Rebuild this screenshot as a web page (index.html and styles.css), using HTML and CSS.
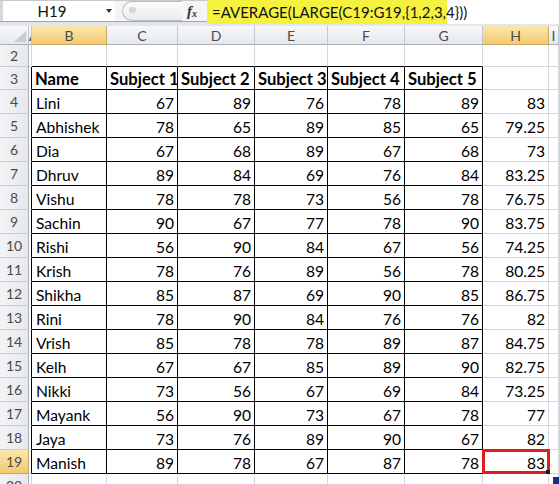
FILE: index.html
```html
<!DOCTYPE html>
<html>
<head>
<meta charset="utf-8">
<link rel="stylesheet" href="styles.css">
</head>
<body>
<div class="fbar">
  <div class="namebox"><span class="nbtext">H19</span><span class="nbarrow"></span></div>
  <div class="fgap">
    <div class="pill"><span class="dot"></span></div>
    <span class="fx">f<sub>x</sub></span>
  </div>
  <div class="finput"><span class="hl">=AVERAGE(LARGE(C19:G19,{1,2,3,4}))</span></div>
</div>
<div class="band"></div>
<div class="sheet">
  <div class="row hrow">
    <div class="c h corner"><svg width="12" height="11" viewBox="0 0 12 11"><path d="M12 0 L12 11 L0 11 Z" fill="#c9ccd1"/></svg></div>
    <div class="c h acol"><span>A</span></div>
    <div class="c h sel">B</div>
    <div class="c h">C</div>
    <div class="c h">D</div>
    <div class="c h">E</div>
    <div class="c h">F</div>
    <div class="c h">G</div>
    <div class="c h sel">H</div>
    <div class="c h">I</div>
  </div>
  <div class="row r2">
    <div class="c rh">2</div><div class="c a"></div>
    <div class="c tt"></div><div class="c tt"></div><div class="c tt"></div><div class="c tt"></div><div class="c tt"></div><div class="c tt"></div>
    <div class="c"></div><div class="c"></div>
  </div>
  <div class="row r3">
    <div class="c rh">3</div><div class="c a tl"></div>
    <div class="c t b">Name</div><div class="c t b">Subject 1</div><div class="c t b">Subject 2</div><div class="c t b">Subject 3</div><div class="c t b">Subject 4</div><div class="c t b">Subject 5</div>
    <div class="c"></div><div class="c"></div>
  </div>
  <div class="row"><div class="c rh">4</div><div class="c a tl"></div><div class="c t s">Lini</div><div class="c t n">67</div><div class="c t n">89</div><div class="c t n">76</div><div class="c t n">78</div><div class="c t n">89</div><div class="c n">83</div><div class="c"></div></div>
  <div class="row"><div class="c rh">5</div><div class="c a tl"></div><div class="c t s">Abhishek</div><div class="c t n">78</div><div class="c t n">65</div><div class="c t n">89</div><div class="c t n">85</div><div class="c t n">65</div><div class="c n">79.25</div><div class="c"></div></div>
  <div class="row"><div class="c rh">6</div><div class="c a tl"></div><div class="c t s">Dia</div><div class="c t n">67</div><div class="c t n">68</div><div class="c t n">89</div><div class="c t n">67</div><div class="c t n">68</div><div class="c n">73</div><div class="c"></div></div>
  <div class="row"><div class="c rh">7</div><div class="c a tl"></div><div class="c t s">Dhruv</div><div class="c t n">89</div><div class="c t n">84</div><div class="c t n">69</div><div class="c t n">76</div><div class="c t n">84</div><div class="c n">83.25</div><div class="c"></div></div>
  <div class="row"><div class="c rh">8</div><div class="c a tl"></div><div class="c t s">Vishu</div><div class="c t n">78</div><div class="c t n">78</div><div class="c t n">73</div><div class="c t n">56</div><div class="c t n">78</div><div class="c n">76.75</div><div class="c"></div></div>
  <div class="row"><div class="c rh">9</div><div class="c a tl"></div><div class="c t s">Sachin</div><div class="c t n">90</div><div class="c t n">67</div><div class="c t n">77</div><div class="c t n">78</div><div class="c t n">90</div><div class="c n">83.75</div><div class="c"></div></div>
  <div class="row"><div class="c rh">10</div><div class="c a tl"></div><div class="c t s">Rishi</div><div class="c t n">56</div><div class="c t n">90</div><div class="c t n">84</div><div class="c t n">67</div><div class="c t n">56</div><div class="c n">74.25</div><div class="c"></div></div>
  <div class="row"><div class="c rh">11</div><div class="c a tl"></div><div class="c t s">Krish</div><div class="c t n">78</div><div class="c t n">76</div><div class="c t n">89</div><div class="c t n">56</div><div class="c t n">78</div><div class="c n">80.25</div><div class="c"></div></div>
  <div class="row"><div class="c rh">12</div><div class="c a tl"></div><div class="c t s">Shikha</div><div class="c t n">85</div><div class="c t n">87</div><div class="c t n">69</div><div class="c t n">90</div><div class="c t n">85</div><div class="c n">86.75</div><div class="c"></div></div>
  <div class="row"><div class="c rh">13</div><div class="c a tl"></div><div class="c t s">Rini</div><div class="c t n">78</div><div class="c t n">90</div><div class="c t n">84</div><div class="c t n">76</div><div class="c t n">76</div><div class="c n">82</div><div class="c"></div></div>
  <div class="row"><div class="c rh">14</div><div class="c a tl"></div><div class="c t s">Vrish</div><div class="c t n">85</div><div class="c t n">78</div><div class="c t n">78</div><div class="c t n">89</div><div class="c t n">87</div><div class="c n">84.75</div><div class="c"></div></div>
  <div class="row"><div class="c rh">15</div><div class="c a tl"></div><div class="c t s">Kelh</div><div class="c t n">67</div><div class="c t n">67</div><div class="c t n">85</div><div class="c t n">89</div><div class="c t n">90</div><div class="c n">82.75</div><div class="c"></div></div>
  <div class="row"><div class="c rh">16</div><div class="c a tl"></div><div class="c t s">Nikki</div><div class="c t n">73</div><div class="c t n">56</div><div class="c t n">67</div><div class="c t n">69</div><div class="c t n">84</div><div class="c n">73.25</div><div class="c"></div></div>
  <div class="row"><div class="c rh">17</div><div class="c a tl"></div><div class="c t s">Mayank</div><div class="c t n">56</div><div class="c t n">90</div><div class="c t n">73</div><div class="c t n">67</div><div class="c t n">78</div><div class="c n">77</div><div class="c"></div></div>
  <div class="row"><div class="c rh">18</div><div class="c a tl"></div><div class="c t s">Jaya</div><div class="c t n">73</div><div class="c t n">76</div><div class="c t n">89</div><div class="c t n">90</div><div class="c t n">67</div><div class="c n">82</div><div class="c"></div></div>
  <div class="row"><div class="c rh sel">19</div><div class="c a tl"></div><div class="c t s">Manish</div><div class="c t n">89</div><div class="c t n">78</div><div class="c t n">67</div><div class="c t n">87</div><div class="c t n">78</div><div class="c n active">83<span class="handle"></span><span class="navy"></span></div><div class="c"></div></div>
  <div class="row"><div class="c rh">20</div><div class="c a"></div><div class="c"></div><div class="c"></div><div class="c"></div><div class="c"></div><div class="c"></div><div class="c"></div><div class="c"></div><div class="c"></div></div>
</div>
</body>
</html>
```
FILE: styles.css
```css
* { box-sizing: border-box; }
body {
  margin: 0;
  width: 559px;
  height: 484px;
  overflow: hidden;
  background: #fff;
  font-family: Lato, "Liberation Sans", sans-serif;
  color: #000;
}
.fbar {
  display: flex;
  height: 22px;
  border-top: 1px solid #c9c9c9;
  border-bottom: 1px solid #a6a6a6;
  background: #fff;
}
.namebox {
  width: 115px;
  border-left: 3px solid #d6d9de;
  display: flex;
  align-items: center;
  background: #fff;
}
.nbtext {
  width: 98px;
  text-align: center;
  font-size: 15px;
  color: #111;
}
.nbarrow {
  margin-left: 5px;
  width: 0;
  height: 0;
  border-left: 3px solid transparent;
  border-right: 3px solid transparent;
  border-top: 4px solid #333;
}
.fgap {
  width: 92px;
  display: flex;
  align-items: center;
  background: #f5f5f5;
}
.pill {
  margin-left: 7px;
  width: 60px;
  height: 20px;
  border: 1px solid #b9bcc0;
  border-right: none;
  border-radius: 10px 0 0 10px;
  background: linear-gradient(#fdfdfd, #e9eaec);
  position: relative;
}
.dot {
  position: absolute;
  left: 6px;
  top: 5px;
  width: 7px;
  height: 6px;
  border-radius: 50%;
  background: #d2d4d8;
}
.fx {
  margin-left: 5px;
  font-family: "Liberation Serif", serif;
  font-style: italic;
  font-weight: bold;
  font-size: 15px;
  color: #333;
  line-height: 1;
}
.fx sub { font-size: 10px; vertical-align: -1px; }
.finput {
  flex: 1;
  align-self: flex-start;
  margin-top: -1px;
  background: #fff;
  white-space: nowrap;
}
.hl {
  position: relative;
  z-index: 2;
  display: inline-block;
  height: 24px;
  width: 240px;
  padding: 0 0 0 5px;
  line-height: 24px;
  font-size: 15px;
  white-space: nowrap;
  background: #f4f23e;
  color: #111;
}
.band {
  height: 4px;
  background: #e2e5e9;
}
.row {
  display: grid;
  grid-template-columns: 29px 3px 75px 71px 77px 73px 77px 78px 66px 10px;
  height: 24px;
}
.hrow { height: 19px; }
.r2 { height: 22px; }
.r3 { height: 23px; }
.c {
  border-right: 1px solid #d4d6d9;
  border-bottom: 1px solid #d4d6d9;
  display: flex;
  align-items: flex-end;
  font-size: 15.6px;
  line-height: 19px;
  white-space: nowrap;
  overflow: hidden;
}
.h {
  background: linear-gradient(#f7f8fa, #e5e8ec);
  border-right-color: #c3c7cd;
  border-bottom-color: #a9b0b9;
  justify-content: center;
  align-items: center;
  font-size: 14px;
  color: #4b4b4b;
}
.h.sel, .rh.sel {
  background: linear-gradient(#fbe7ad, #f4c970);
  border-right-color: #c9a760;
  border-bottom-color: #c9a760;
}
.corner {
  justify-content: flex-end;
  align-items: flex-end;
  padding: 0 2px 2px 0;
}
.acol {
  justify-content: flex-start;
  color: #333;
}
.rh {
  background: linear-gradient(90deg, #f2f3f5, #e6e8ec);
  border-right-color: #a9b0b9;
  border-bottom-color: #c9ccd1;
  justify-content: center;
  align-items: center;
  font-size: 14px;
  color: #4b4b4b;
}
.tl { border-right-color: #000; }
.tt { border-bottom-color: #000; }
.t {
  border-right-color: #000;
  border-bottom-color: #000;
}
.s { padding-left: 4px; }
.b { padding-left: 3px; font-weight: bold; font-size: 16.6px; }
.n { justify-content: flex-end; padding-right: 3px; }
.active {
  position: relative;
  overflow: visible;
}
.active::after {
  content: "";
  position: absolute;
  left: -1px;
  top: -1px;
  right: -2px;
  bottom: -1px;
  border: 3px solid #e01c1c;
}
.handle {
  position: absolute;
  right: -2px;
  bottom: -1px;
  width: 4px;
  height: 4px;
  background: #1a1a1a;
  z-index: 3;
}
.navy {
  position: absolute;
  left: 70px;
  top: 27px;
  width: 6px;
  height: 8px;
  background: #1c2f86;
}
```
